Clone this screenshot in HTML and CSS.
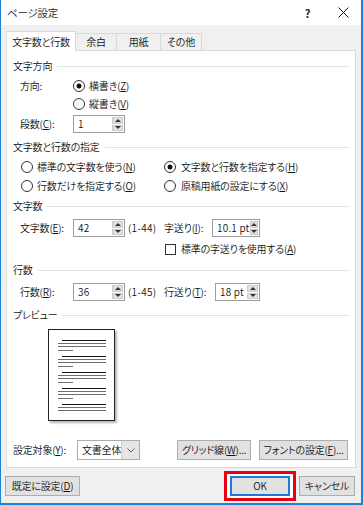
FILE: index.html
```html
<!DOCTYPE html>
<html lang="ja">
<head>
  <meta charset="utf-8">
  <title>ページ設定</title>
  <link rel="stylesheet" href="styles.css">
</head>
<body>
  <div class="dialog">
    <div class="titlebar">
      <span class="title">ページ設定</span>
      <span class="tb-btn help">?</span>
      <span class="tb-btn close">
        <svg width="11" height="11" viewBox="0 0 11 11"><path d="M0.5 0.5L10.5 10.5M10.5 0.5L0.5 10.5" stroke="#111" stroke-width="1" fill="none"/></svg>
      </span>
    </div>

    <div class="content">
      <div class="tabs">
        <div class="tab active">文字数と行数</div>
        <div class="tab tab-margin">余白</div>
        <div class="tab tab-paper">用紙</div>
        <div class="tab tab-other">その他</div>
      </div>

      <div class="panel">
        <!-- text direction -->
        <div class="group-title">文字方向</div>
        <div class="row mt-4">
          <span class="lbl">方向:</span>
          <span class="radio checked">横書き(<u>Z</u>)</span>
        </div>
        <div class="row row-indent">
          <span class="radio">縦書き(<u>V</u>)</span>
        </div>
        <div class="row mt-2">
          <span class="lbl">段数(<u>C</u>):</span>
          <span class="spin w-52"><span class="spin-val">1</span><span class="spin-btns"><i class="up"></i><i class="down"></i></span></span>
        </div>

        <!-- grid mode -->
        <div class="group-title mt-7">文字数と行数の指定</div>
        <div class="row radio-row mt-4">
          <span class="radio col-1">標準の文字数を使う(<u>N</u>)</span>
          <span class="radio checked">文字数と行数を指定する(<u>H</u>)</span>
        </div>
        <div class="row radio-row mt-1">
          <span class="radio col-1">行数だけを指定する(<u>O</u>)</span>
          <span class="radio">原稿用紙の設定にする(<u>X</u>)</span>
        </div>

        <!-- characters -->
        <div class="group-title mt-4">文字数</div>
        <div class="row mt-6">
          <span class="lbl">文字数(<u>E</u>):</span>
          <span class="spin w-52"><span class="spin-val">42</span><span class="spin-btns"><i class="up"></i><i class="down"></i></span></span>
          <span class="range">(1-44)</span>
          <span class="lbl2 w-48">字送り(<u>I</u>):</span>
          <span class="spin w-48"><span class="spin-val">10.1 pt</span><span class="spin-btns"><i class="up"></i><i class="down"></i></span></span>
        </div>
        <div class="row check-row mt-3">
          <span class="check">標準の字送りを使用する(<u>A</u>)</span>
        </div>

        <!-- lines -->
        <div class="group-title mt-5">行数</div>
        <div class="row mt-6">
          <span class="lbl">行数(<u>R</u>):</span>
          <span class="spin w-52"><span class="spin-val">36</span><span class="spin-btns"><i class="up"></i><i class="down"></i></span></span>
          <span class="range">(1-45)</span>
          <span class="lbl2 w-51">行送り(<u>T</u>):</span>
          <span class="spin w-45"><span class="spin-val">18 pt</span><span class="spin-btns"><i class="up"></i><i class="down"></i></span></span>
        </div>

        <!-- preview -->
        <div class="group-title mt-7">プレビュー</div>
        <div class="preview">
          <div class="para"><i class="ln first"></i><i class="ln"></i><i class="ln"></i><i class="ln short"></i></div>
          <div class="para"><i class="ln first"></i><i class="ln"></i><i class="ln"></i><i class="ln short"></i></div>
          <div class="para"><i class="ln first"></i><i class="ln"></i><i class="ln"></i><i class="ln short"></i></div>
          <div class="para"><i class="ln first"></i><i class="ln"></i><i class="ln"></i><i class="ln short"></i></div>
          <div class="para"><i class="ln first"></i><i class="ln"></i><i class="ln"></i></div>
        </div>

        <div class="bottom-row">
          <span class="lbl-target">設定対象(<u>Y</u>):</span>
          <span class="select">
            <span class="select-val">文書全体</span>
            <span class="select-arrow"><svg width="8" height="5" viewBox="0 0 8 5"><path d="M0.5 0.5L4 4L7.5 0.5" stroke="#666" fill="none"/></svg></span>
          </span>
          <span class="btn btn-grid">グリッド線(<u>W</u>)...</span>
          <span class="btn btn-font">フォントの設定(<u>F</u>)...</span>
        </div>
      </div>
    </div>

    <div class="footer">
      <span class="btn btn-default">既定に設定(<u>D</u>)</span>
      <span class="mark">
        <span class="btn btn-ok">OK</span>
      </span>
      <span class="btn btn-cancel">キャンセル</span>
    </div>
  </div>
</body>
</html>
```

FILE: styles.css
```css
* {
  box-sizing: border-box;
}

body {
  margin: 0;
  background: #fff;
  font-family: "Noto Sans CJK JP", sans-serif;
  font-size: 10px;
  font-weight: 350;
  line-height: 14px;
  letter-spacing: -0.2px;
  color: #111;
  font-feature-settings: "palt";
}

u {
  text-decoration: underline;
  text-underline-offset: 1px;
}

.dialog {
  width: 363px;
  height: 505px;
  display: flex;
  flex-direction: column;
  background: #f0f0f0;
  border: 1px solid #1883d7;
  border-top: none;
  border-right-width: 2px;
  border-bottom-width: 2px;
}

/* title bar */
.titlebar {
  height: 25px;
  display: flex;
  align-items: center;
  background: #fff;
  padding-left: 6px;
  flex: none;
}

.title {
  flex: 1;
  font-size: 10.5px;
  color: #222;
}

.tb-btn {
  height: 25px;
  display: flex;
  align-items: center;
  justify-content: center;
}

.help {
  width: 35px;
  font-size: 11px;
  font-weight: bold;
  color: #222;
}

.close {
  width: 36px;
}

/* tabs */
.content {
  padding: 6px 5px 0 5px;
  flex: none;
}

.tabs {
  display: flex;
  align-items: flex-end;
  height: 20px;
}

.tab {
  height: 18px;
  display: flex;
  align-items: center;
  justify-content: center;
  border: 1px solid #d9d9d9;
  border-left: none;
  background: #f0f0f0;
}

.tab.active {
  position: relative;
  z-index: 1;
  height: 20px;
  width: 70px;
  background: #fff;
  border-left: 1px solid #d9d9d9;
  border-bottom: none;
}

.tab-margin { width: 41px; }
.tab-paper { width: 44px; }
.tab-other { width: 41px; }

.panel {
  margin-top: -1px;
  background: #fff;
  border: 1px solid #d9d9d9;
  padding: 8px 6px 7px 6px;
}

.group-title {
  display: flex;
  align-items: center;
  height: 14px;
  white-space: nowrap;
}

.group-title::after {
  content: '';
  flex: 1;
  height: 1px;
  margin-left: 5px;
  background: #e3e3e3;
}

.mt-1 { margin-top: 1px; }
.mt-2 { margin-top: 2px; }
.mt-3 { margin-top: 3px; }
.mt-4 { margin-top: 4px; }
.mt-5 { margin-top: 5px; }
.mt-6 { margin-top: 6px; }
.mt-7 { margin-top: 7px; }

.row {
  display: flex;
  align-items: center;
  height: 18px;
  padding-left: 7px;
  white-space: nowrap;
}

.row-indent {
  padding-left: 60px;
}

.radio-row {
  padding-left: 8px;
}

.check-row {
  padding-left: 152px;
}

.lbl {
  width: 53px;
}

.lbl2 {
  flex: none;
}

.range {
  width: 36px;
  margin-left: 3px;
  letter-spacing: 0.3px;
}

.w-45 { width: 45px; }
.w-48 { width: 48px; }
.w-51 { width: 51px; }
.w-52 { width: 52px; }

/* radio + checkbox */
.radio,
.check {
  display: inline-flex;
  align-items: center;
}

.radio::before {
  content: '';
  width: 10px;
  height: 10px;
  margin-right: 4px;
  border: 1px solid #333;
  border-radius: 50%;
  background: #fff;
  flex: none;
}

.radio.checked::before {
  background: radial-gradient(circle, #111 0 2.2px, #fff 2.8px);
}

.col-1 {
  width: 143px;
}

.col-1 + .radio::before {
  margin-right: 5px;
}

.check::before {
  content: '';
  width: 9px;
  height: 9px;
  margin-right: 5px;
  border: 1px solid #333;
  background: #fff;
  flex: none;
}

/* spinner */
.spin {
  display: flex;
  height: 18px;
  border: 1px solid #9c9c9c;
  background: #fff;
  flex: none;
}

.spin-val {
  flex: 1;
  padding-left: 4px;
  line-height: 16px;
  letter-spacing: 0.2px;
}

.spin-btns {
  width: 13px;
  display: flex;
  flex-direction: column;
  gap: 1px;
  padding: 1px;
}

.spin-btns i {
  flex: 1;
  display: flex;
  align-items: center;
  justify-content: center;
  background: #e1e1e1;
  border: 1px solid #c9c9c9;
}

.spin-btns .up::after {
  content: '';
  border-left: 3px solid transparent;
  border-right: 3px solid transparent;
  border-bottom: 3px solid #333;
}

.spin-btns .down::after {
  content: '';
  border-left: 3px solid transparent;
  border-right: 3px solid transparent;
  border-top: 3px solid #333;
}

/* preview page */
.preview {
  width: 67px;
  height: 92px;
  margin-top: 7px;
  margin-left: 35px;
  padding-top: 10px;
  border: 1px solid #222;
  background: #fff;
  box-shadow: 2px 2px 2px #b5b5b5;
}

.para {
  display: flex;
  flex-direction: column;
  margin-bottom: 5px;
}

.ln {
  display: block;
  height: 1px;
  width: 48px;
  margin-left: 9px;
  margin-top: 2px;
  background: #6e6e6e;
}

.ln.first {
  width: 44px;
  margin-left: 13px;
  margin-top: 0;
  background: #1a1a1a;
}

.ln.short {
  width: 15px;
  margin-top: 3px;
}

/* bottom of panel */
.bottom-row {
  display: flex;
  align-items: center;
  height: 20px;
  margin-top: 19px;
  white-space: nowrap;
}

.lbl-target {
  width: 64px;
}

.select {
  display: flex;
  width: 63px;
  height: 20px;
  border: 1px solid #adadad;
  background: #fff;
}

.select-val {
  flex: 1;
  padding-left: 4px;
  line-height: 18px;
}

.select-arrow {
  width: 21px;
  display: flex;
  align-items: center;
  justify-content: center;
  background: #e5e5e5;
  border-left: 1px solid #cfcfcf;
}

.btn {
  display: inline-flex;
  align-items: center;
  justify-content: center;
  height: 20px;
  background: #e1e1e1;
  border: 1px solid #adadad;
  white-space: nowrap;
  flex: none;
}

.btn-grid {
  width: 74px;
  margin-left: 37px;
}

.btn-font {
  width: 89px;
  margin-left: 8px;
}

/* footer */
.footer {
  flex: 1;
  display: flex;
  align-items: center;
  padding: 0 6px 0 4px;
}

.btn-default {
  width: 75px;
}

.mark {
  margin-left: auto;
  display: flex;
  border: 3px solid #e60012;
  padding: 2px 3px;
  background: #fff;
}

.btn-ok {
  width: 60px;
  border: 2px solid #1c7ad6;
}

.btn-cancel {
  width: 56px;
  margin-left: 3px;
}
```
